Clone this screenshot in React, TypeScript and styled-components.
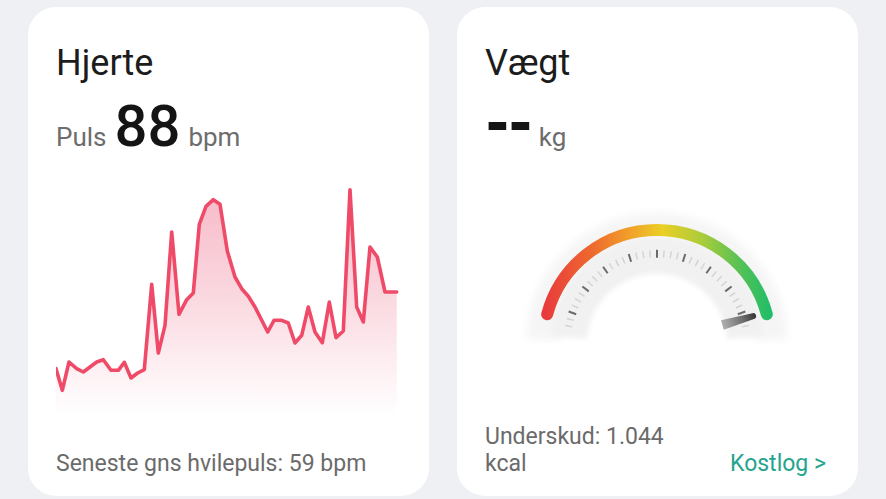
import React from 'react';
import styled, { createGlobalStyle } from 'styled-components';

const GlobalStyle = createGlobalStyle`
  html, body {
    margin: 0;
    padding: 0;
    background: #eff0f3;
    font-family: Roboto, 'Noto Sans', 'Liberation Sans', sans-serif;
  }
`;

// heart rate samples, in page pixels (x, y)
const pulsePoints: [number, number][] = [
  [56, 371.7], [62.3, 393.3], [69, 365], [76.7, 371.7], [83.3, 375], [96.7, 365],
  [103.3, 362.7], [111, 373.3], [118.3, 373.3], [124.3, 365.3], [131, 381], [137.7, 376],
  [144.3, 372.7], [151.7, 287.3], [158.3, 356], [165, 328.3], [171.7, 235], [179, 317.3],
  [186.7, 302.7], [193.3, 296], [199.3, 227.3], [206, 209.3], [213.3, 202.7], [220, 207.3],
  [227.3, 254], [235, 280], [241.7, 291.7], [248.3, 299.3], [255, 310], [267.7, 335],
  [274, 323.3], [281.7, 323.3], [288.3, 326], [295, 346], [301.7, 338.3], [308.3, 310],
  [315, 335], [322.3, 345.7], [329.3, 305], [336, 340.7], [343.3, 334], [350, 192.7],
  [356.7, 310], [363.3, 325], [370, 250], [377.3, 260], [385, 295], [396.7, 295],
];

const GAUGE_CX = 657;
const GAUGE_CY = 346.7;

function polar(r: number, deg: number): [number, number] {
  const rad = (deg * Math.PI) / 180;
  return [GAUGE_CX + r * Math.cos(rad), GAUGE_CY - r * Math.sin(rad)];
}

function arcPath(r: number, from: number, to: number) {
  const [x1, y1] = polar(r, from);
  const [x2, y2] = polar(r, to);
  const large = from - to > 180 ? 1 : 0;
  return `M${x1} ${y1} A${r} ${r} 0 ${large} 1 ${x2} ${y2}`;
}

function PulseChart() {
  const line = pulsePoints.map(([x, y], i) => `${i === 0 ? 'M' : 'L'}${x} ${y}`).join(' ');
  const last = pulsePoints[pulsePoints.length - 1];
  const area = `${line} L${last[0]} 420 L56 420 Z`;

  return (
    <ChartSvg width={345} height={240} viewBox='56 180 345 240'>
      <defs>
        <linearGradient id='pulseFill' x1='0' y1='190' x2='0' y2='418' gradientUnits='userSpaceOnUse'>
          <stop offset='0' stopColor='#f6b9c7' />
          <stop offset='0.45' stopColor='#fad6de' />
          <stop offset='1' stopColor='#ffffff' />
        </linearGradient>
      </defs>
      <path d={area} fill='url(#pulseFill)' />
      <path d={line} fill='none' stroke='#ef4b69' strokeWidth={3.6} strokeLinejoin='round' strokeLinecap='round' />
    </ChartSvg>
  );
}

function WeightGauge() {
  const majors: number[] = [];
  for (let i = 0; i < 9; i++) majors.push(160 - i * 17.5);
  const minors: number[] = [];
  for (let a = 168.75; a > 10; a -= 17.5 / 4) {
    if (!majors.some(m => Math.abs(m - a) < 1)) minors.push(a);
  }

  const [n1x, n1y] = polar(68, 16);

  return (
    <GaugeSvg width={345} height={200} viewBox='485 180 345 200'>
      <defs>
        <linearGradient id='gaugeColors' x1='542' y1='0' x2='773' y2='0' gradientUnits='userSpaceOnUse'>
          <stop offset='0' stopColor='#e8383e' />
          <stop offset='0.22' stopColor='#ee6a2e' />
          <stop offset='0.38' stopColor='#f1a02a' />
          <stop offset='0.52' stopColor='#ebcf25' />
          <stop offset='0.7' stopColor='#a7cc3b' />
          <stop offset='0.86' stopColor='#55c156' />
          <stop offset='1' stopColor='#1cbd6b' />
        </linearGradient>
        <linearGradient id='needleShade' x1='0' y1='0' x2='35' y2='0' gradientUnits='userSpaceOnUse'>
          <stop offset='0' stopColor='#b0b0b0' />
          <stop offset='0.6' stopColor='#6e6e6e' />
          <stop offset='1' stopColor='#333333' />
        </linearGradient>
        <filter id='soft' x='-20%' y='-20%' width='140%' height='140%'>
          <feGaussianBlur stdDeviation='4' />
        </filter>
        <filter id='softer' x='-20%' y='-20%' width='140%' height='140%'>
          <feGaussianBlur stdDeviation='2.5' />
        </filter>
      </defs>

      <path d={arcPath(113.7, 178, 2)} fill='none' stroke='#f5f5f5' strokeWidth={34} filter='url(#soft)' />
      <path d={arcPath(88, 176, 4)} fill='none' stroke='#f1f1f1' strokeWidth={36} filter='url(#softer)' />

      {minors.map(a => {
        const [x1, y1] = polar(86.5, a);
        const [x2, y2] = polar(93.5, a);
        return <line key={`m${a}`} x1={x1} y1={y1} x2={x2} y2={y2} stroke='#d2d2d2' strokeWidth={1.4} />;
      })}
      {majors.map(a => {
        const [x1, y1] = polar(86, a);
        const [x2, y2] = polar(94, a);
        return <line key={`M${a}`} x1={x1} y1={y1} x2={x2} y2={y2} stroke='#6a6a6a' strokeWidth={2} />;
      })}

      <path d={arcPath(113.7, 165, 15)} fill='none' stroke='url(#gaugeColors)' strokeWidth={12} strokeLinecap='round' />

      <g transform={`translate(${n1x} ${n1y}) rotate(-16)`}>
        <path d='M0 -5 L32 -3 A3 3 0 0 1 32 3 L0 5 Z' fill='url(#needleShade)' />
      </g>
    </GaugeSvg>
  );
}

function App() {
  return (
    <>
      <GlobalStyle />
      <Page>
        <Card>
          <Title>Hjerte</Title>
          <ValueRow>
            <Label>Puls</Label>
            <BigValue>88</BigValue>
            <Label>bpm</Label>
          </ValueRow>
          <PulseChart />
          <Footer>
            <FootText>Seneste gns hvilepuls: 59 bpm</FootText>
          </Footer>
        </Card>
        <Card>
          <Title>Vægt</Title>
          <ValueRow>
            <Dashes>--</Dashes>
            <Label>kg</Label>
          </ValueRow>
          <WeightGauge />
          <Footer>
            <FootText $narrow>Underskud: 1.044 kcal</FootText>
            <FootLink>Kostlog &gt;</FootLink>
          </Footer>
        </Card>
      </Page>
    </>
  );
}

export default App;

const Page = styled.main`
  display: flex;
  gap: 28px;
  padding: 7px 28px 0;
  height: 499px;
  box-sizing: border-box;
  overflow: hidden;
`;

const Card = styled.section`
  flex: 1;
  height: 489px;
  box-sizing: border-box;
  background: #ffffff;
  border-radius: 28px;
  padding: 34px 28px 19px;
  display: flex;
  flex-direction: column;
`;

const Title = styled.h2`
  margin: 0;
  font-size: 36px;
  line-height: 44px;
  font-weight: 400;
  color: #1c1c1c;
`;

const ValueRow = styled.div`
  display: flex;
  align-items: baseline;
  gap: 8px;
  margin-top: 12px;
  line-height: 1;
`;

const Label = styled.span`
  font-size: 26px;
  color: #6d6d6d;
`;

const BigValue = styled.span`
  font-size: 58px;
  font-weight: 500;
  color: #141414;
  line-height: 58px;
`;

const Dashes = styled.span`
  display: inline-block;
  font-size: 58px;
  font-weight: 700;
  line-height: 58px;
  color: #141414;
  letter-spacing: -2px;
  transform: scale(1.1, 1.25);
  transform-origin: left 70%;
  margin-right: 4px;
`;

const ChartSvg = styled.svg`
  display: block;
  margin-top: 22px;
  flex: none;
`;

const GaugeSvg = styled.svg`
  display: block;
  margin-top: 22px;
  flex: none;
`;

const Footer = styled.div`
  margin-top: auto;
  display: flex;
  justify-content: space-between;
  align-items: flex-end;
`;

const FootText = styled.p<{ $narrow?: boolean }>`
  margin: 0;
  font-size: 23px;
  line-height: 27px;
  color: #6b6b6b;
  max-width: ${props => (props.$narrow ? '200px' : 'none')};
`;

const FootLink = styled.a`
  font-size: 23px;
  line-height: 27px;
  color: #25a48e;
  margin-right: 4px;
  cursor: pointer;
`;
